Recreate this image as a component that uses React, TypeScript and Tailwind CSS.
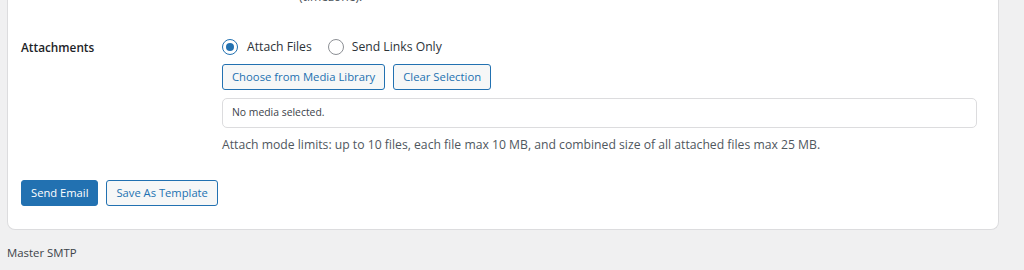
export default function App() {
  const font = { fontFamily: '"Open Sans", "Noto Sans", sans-serif' };
  return (
    <div className="h-[270px] w-[1024px] overflow-hidden bg-[#f0f0f1] text-[#1d2327]" style={font}>
      <div className="-mt-[14px] ml-[7px] mr-[25px] rounded-b-[8px] border border-t-0 border-[#dcdcde] bg-white px-[13px] pb-[23px]">
        <div className="flex">
          <div className="w-[201px] shrink-0" />
          <p className="pl-[77px] text-[12.2px] leading-[22px] text-[#50575e]">(timezone).</p>
        </div>

        <div className="mt-[29px] flex">
          <div className="w-[201px] shrink-0 text-[11.8px] font-semibold leading-[20px]">
            Attachments
          </div>
          <div className="flex flex-1 flex-col pr-[8px]">
            <div className="flex h-[20px] items-center gap-[12px] text-[12.2px] text-[#2c3338]">
              <label className="flex items-center gap-[9px]">
                <span className="flex h-[16px] w-[16px] items-center justify-center rounded-full border border-[#2271b1] bg-white">
                  <span className="h-[8px] w-[8px] rounded-full bg-[#2271b1]" />
                </span>
                Attach Files
              </label>
              <label className="ml-[4px] flex items-center gap-[8px]">
                <span className="h-[16px] w-[16px] rounded-full border border-[#8c8f94] bg-white" />
                Send Links Only
              </label>
            </div>

            <div className="mt-[7px] flex gap-[8px]">
              <button className="h-[26px] rounded-[3px] border border-[#2271b1] bg-[#f6f7f7] px-[9px] text-[11.3px] text-[#2271b1]">
                Choose from Media Library
              </button>
              <button className="h-[26px] rounded-[3px] border border-[#2271b1] bg-[#f6f7f7] px-[9px] text-[11.3px] text-[#2271b1]">
                Clear Selection
              </button>
            </div>

            <div className="mt-[8px] flex h-[30px] items-center rounded-[5px] border border-[#dcdcde] bg-white px-[9px] text-[10.4px] text-[#3c434a]">
              No media selected.
            </div>

            <p className="mt-[8px] text-[12.2px] leading-[18px] text-[#50575e]">
              Attach mode limits: up to 10 files, each file max 10 MB, and combined size of all attached files max 25 MB.
            </p>
          </div>
        </div>

        <div className="mt-[26px] flex gap-[8px]">
          <button className="h-[26px] rounded-[3px] border border-[#2271b1] bg-[#2271b1] px-[9px] text-[11.2px] text-white">
            Send Email
          </button>
          <button className="h-[26px] rounded-[3px] border border-[#2271b1] bg-[#f6f7f7] px-[9px] text-[11.2px] text-[#2271b1]">
            Save As Template
          </button>
        </div>
      </div>

      <p className="ml-[7px] mt-[14px] text-[11.4px] leading-[18px] text-[#3c434a]">Master SMTP</p>
    </div>
  );
}
